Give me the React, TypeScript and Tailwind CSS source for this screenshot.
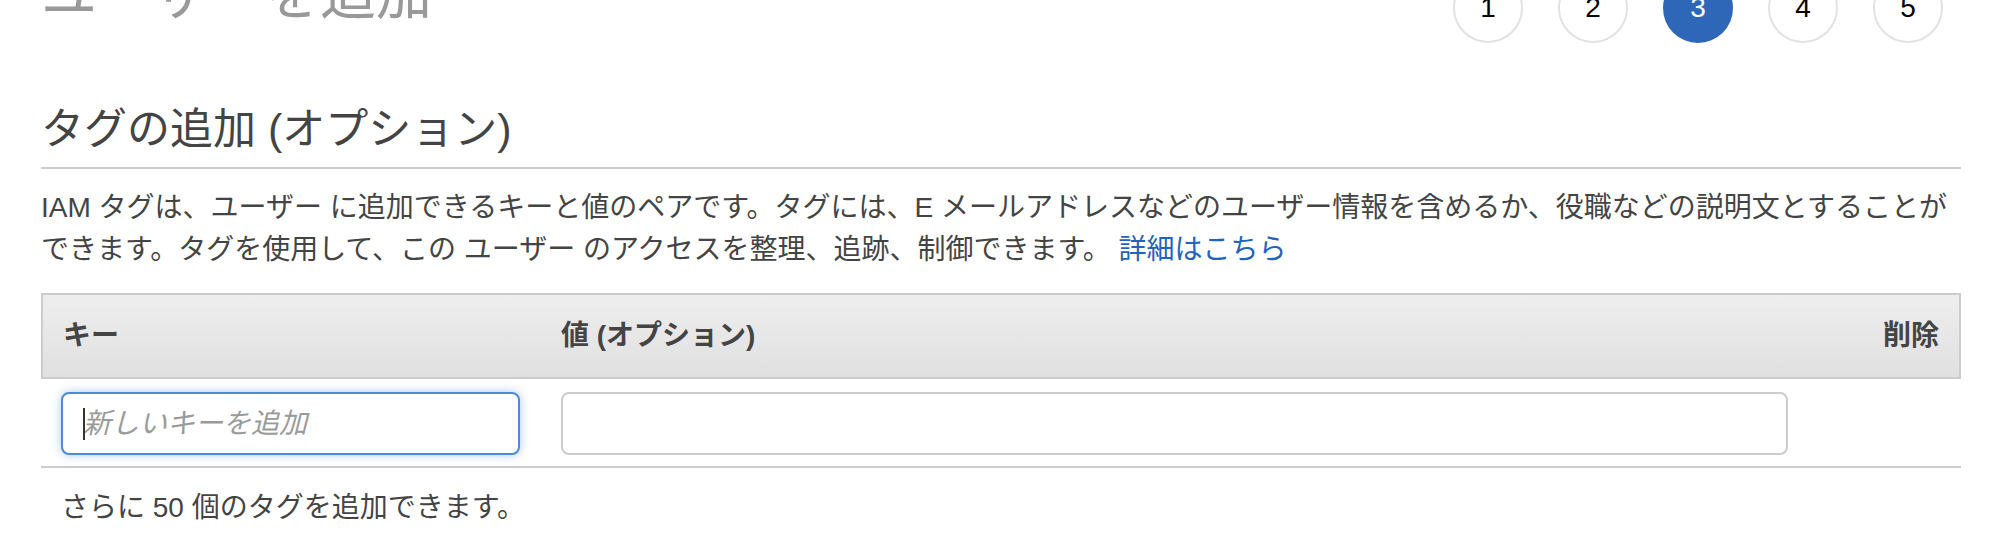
import { useState } from 'react';

const steps = [1, 2, 3, 4, 5];

function StepDot({ n, active }: { n: number; active: boolean }) {
  return (
    <div
      className={
        active
          ? 'w-[70px] h-[70px] rounded-full bg-[#2f67b8] text-white flex items-center justify-center text-[28px] leading-none'
          : 'w-[70px] h-[70px] rounded-full border-2 border-[#e2e2e2] bg-white text-black flex items-center justify-center text-[28px] leading-none'
      }
    >
      {n}
    </div>
  );
}

export default function App() {
  const [tagKey, setTagKey] = useState('');
  const [tagValue, setTagValue] = useState('');

  return (
    <div className="min-h-[557px] bg-white pl-[41px] pr-[38px] font-['Liberation_Sans','Noto_Sans_CJK_JP',sans-serif] text-[#444] overflow-hidden">
      {/* page title row, scrolled partly out of view */}
      <div className="-mt-[27px] flex items-start justify-between">
        <h1 className="-mt-[6px] text-[56px] leading-none font-normal text-[#999]">ユーザーを追加</h1>
        <div className="mr-[18px] flex gap-[35px]">
          {steps.map((s) => (
            <StepDot key={s} n={s} active={s === 3} />
          ))}
        </div>
      </div>

      <h2 className="mt-[65px] pb-[16px] border-b-2 border-[#ccc] text-[43px] leading-none font-normal">
        タグの追加 (オプション)
      </h2>

      <p className="mt-[18px] text-[28px] leading-[42px]">
        IAM タグは、ユーザー に追加できるキーと値のペアです。タグには、E メールアドレスなどのユーザー情報を含めるか、役職などの説明文とすることが
        <br />
        できます。タグを使用して、この ユーザー のアクセスを整理、追跡、制御できます。{' '}
        <a href="#" className="text-[#2263bd]">
          詳細はこちら
        </a>
      </p>

      <div className="mt-[22px]">
        <div className="h-[86px] flex items-center border-2 border-[#ccc] bg-gradient-to-b from-[#eeeeee] to-[#e0e0e0] pl-[20px] pr-[20px] text-[28px] font-bold">
          <div className="w-[498px]">キー</div>
          <div>値 (オプション)</div>
          <div className="ml-auto">削除</div>
        </div>

        <div className="h-[89px] flex items-center border-b-2 border-[#ccc] pl-[20px] pt-[2px]">
          <div className="relative w-[459px]">
            <input
              value={tagKey}
              onChange={(e) => setTagKey(e.target.value)}
              placeholder="新しいキーを追加"
              className="w-full h-[63px] rounded-[8px] border-2 border-[#4a8ad8] bg-white pl-[20px] text-[28px] italic outline-none caret-transparent shadow-[0_0_10px_rgba(74,138,216,0.45)] placeholder:text-[#9a9a9a]"
            />
            <span className="absolute left-[22px] top-[16px] h-[32px] w-[2px] bg-[#333]" />
          </div>
          <input
            value={tagValue}
            onChange={(e) => setTagValue(e.target.value)}
            className="ml-[41px] w-[1227px] h-[63px] rounded-[8px] border-2 border-[#ccc] bg-white px-[20px] text-[28px] outline-none"
          />
        </div>
      </div>

      <p className="mt-[19px] pl-[20px] text-[28px] leading-[42px]">さらに 50 個のタグを追加できます。</p>
    </div>
  );
}
